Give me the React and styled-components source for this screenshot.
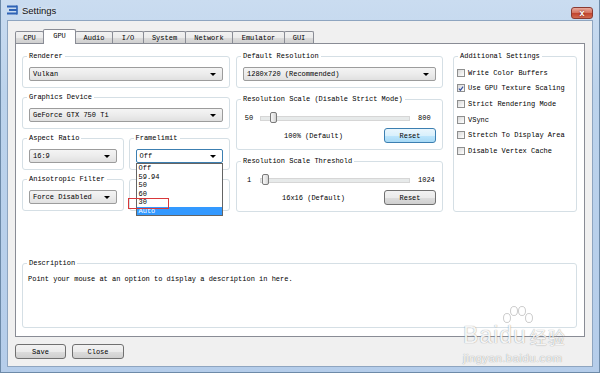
import React from "react"
import styled, { createGlobalStyle } from "styled-components"

const GlobalStyle = createGlobalStyle`
  html, body {
    margin: 0;
    padding: 0;
    background: #fff;
  }
  body {
    font-family: "Liberation Mono", "DejaVu Sans Mono", monospace;
    font-size: 7px;
    color: #000;
  }
  * {
    box-sizing: border-box;
  }
`

const Window = styled.div`
  position: relative;
  width: 600px;
  height: 373px;
  display: flex;
  flex-direction: column;
  padding: 0 6px 5px;
  border: 1px solid #6d8aa8;
  border-top: none;
  background: linear-gradient(180deg, #cadcf0 0%, #bcd3ec 25%, #b5cdea 100%);
  overflow: hidden;
`

const TitleBar = styled.div`
  height: 20px;
  display: flex;
  align-items: center;
`

const TitleText = styled.span`
  margin-left: 3px;
  font-family: "Liberation Sans", Arial, sans-serif;
  font-size: 9.5px;
  color: #111;
  text-shadow: 0 0 4px rgba(255, 255, 255, 0.9);
`

const CloseButton = styled.div`
  align-self: flex-start;
  margin-top: 7px;
  margin-left: auto;
  width: 22px;
  height: 12px;
  border: 1px solid #8a3a32;
  border-radius: 3px;
  background: linear-gradient(180deg, #e9a99c 0%, #d67663 45%, #c2452f 55%, #d2694f 100%);
  display: flex;
  align-items: center;
  justify-content: center;
  color: #fff;
  font-family: "Liberation Sans", Arial, sans-serif;
  font-weight: bold;
  font-size: 9px;
  line-height: 1;
  text-shadow: 0 0 2px #5a1a12;
`

const Client = styled.div`
  flex: 1;
  display: flex;
  flex-direction: column;
  background: #f0f0f0;
  border: 1px solid #8ea5c0;
  padding: 8px 7px 7px;
`

const TabStrip = styled.div`
  height: 14px;
  display: flex;
  align-items: flex-end;
`

const Tab = styled.div`
  position: relative;
  width: ${p => p.$w}px;
  height: ${p => (p.$active ? 15 : 12)}px;
  margin-right: -1px;
  margin-bottom: ${p => (p.$active ? -1 : 0)}px;
  z-index: ${p => (p.$active ? 2 : 1)};
  border: 1px solid #898c95;
  border-bottom: none;
  border-radius: 2px 2px 0 0;
  background: ${p =>
    p.$active
      ? "#fff"
      : "linear-gradient(180deg, #f2f2f2 0%, #ebebeb 50%, #dddddd 51%, #cfcfcf 100%)"};
  display: flex;
  align-items: ${p => (p.$active ? "flex-start" : "center")};
  padding-top: ${p => (p.$active ? 2 : 0)}px;
  justify-content: center;
  white-space: nowrap;
`

const Panel = styled.div`
  height: 294px;
  border: 1px solid #898c95;
  background: #fff;
  padding: 12px 7px 8px 6px;
  display: flex;
  flex-direction: column;
  justify-content: space-between;
`

const Columns = styled.div`
  display: flex;
  align-items: flex-start;
`

const Column = styled.div`
  width: ${p => p.$w}px;
  margin-left: ${p => p.$ml || 0}px;
  display: flex;
  flex-direction: column;
  gap: ${p => p.$gap}px;
`

const Pair = styled.div`
  display: flex;
  gap: 5px;
`

const Group = styled.div`
  position: relative;
  flex: ${p => (p.$grow ? "1 1 0" : "none")};
  min-width: 0;
  height: ${p => (p.$h ? `${p.$h}px` : "auto")};
  border: 1px solid #d5dfe5;
  border-radius: 3px;
  padding: ${p => p.$pad || "10px 6px 6px"};
`

const GroupLabel = styled.span`
  position: absolute;
  top: -5px;
  left: 4px;
  padding: 0 2px;
  line-height: 9px;
  background: #fff;
  white-space: nowrap;
`

const Select = styled.div`
  position: relative;
  height: 14px;
  display: flex;
  align-items: center;
  padding: 0 3px;
  border: 1px solid ${p => (p.$focus ? "#3c7fb1" : "#9c9c9c")};
  border-radius: 2px;
  background: ${p =>
    p.$focus ? "#fff" : "linear-gradient(180deg, #f4f4f4 0%, #ececec 50%, #e0e0e0 100%)"};
  white-space: nowrap;

  &::after {
    content: "";
    position: absolute;
    right: 6px;
    top: 5px;
    border-left: 3px solid transparent;
    border-right: 3px solid transparent;
    border-top: 3px solid #000;
  }
`

const Dropdown = styled.div`
  position: absolute;
  top: 13px;
  left: -1px;
  right: -1px;
  z-index: 5;
  border: 1px solid #646464;
  background: #fff;
`

const Option = styled.div`
  height: 8.5px;
  line-height: 8.5px;
  padding-left: 2px;
  background: ${p => (p.$hl ? "#3399ff" : "transparent")};
  color: ${p => (p.$hl ? "#fff" : "#000")};
`

const Marker = styled.div`
  position: absolute;
  left: -9px;
  top: 34px;
  width: 41px;
  height: 11px;
  border: 1.5px solid #d8383a;
`

const SliderRow = styled.div`
  height: 13px;
  display: flex;
  align-items: center;
`

const MinLabel = styled.span`
  width: 12px;
  margin-right: 5px;
  text-align: center;
`

const MaxLabel = styled.span`
  width: 18px;
  margin-left: 8px;
`

const Track = styled.div`
  position: relative;
  flex: 1;
  height: 13px;

  &::before {
    content: "";
    position: absolute;
    left: 0;
    right: 0;
    top: 5px;
    height: 3px;
    border: 1px solid #d6d6d6;
    background: #e7eaea;
  }
`

const Thumb = styled.div`
  position: absolute;
  top: 1px;
  width: 7px;
  height: 11px;
  border: 1px solid #7a7a7a;
  border-radius: 2px;
  background: linear-gradient(90deg, #f6f6f6 0%, #e4e4e4 60%, #d2d2d2 100%);
`

const ActionRow = styled.div`
  margin-top: 4px;
  display: flex;
  align-items: center;
`

const DefaultText = styled.span`
  flex: 1;
  text-align: center;
`

const Button = styled.div`
  width: ${p => p.$w}px;
  height: 15px;
  display: flex;
  align-items: center;
  justify-content: center;
  border: 1px solid ${p => (p.$primary ? "#3c7fb1" : "#707070")};
  border-radius: 3px;
  background: ${p =>
    p.$primary
      ? "linear-gradient(180deg, #eaf6fd 0%, #d9f0fc 50%, #bee6fd 51%, #a7d9f5 100%)"
      : "linear-gradient(180deg, #f2f2f2 0%, #ebebeb 50%, #dddddd 51%, #cfcfcf 100%)"};
`

const CheckList = styled.div`
  display: flex;
  flex-direction: column;
`

const CheckRow = styled.div`
  height: 15.6px;
  display: flex;
  align-items: center;
  gap: 3px;
  white-space: nowrap;
`

const Box = styled.div`
  width: 8px;
  height: 8px;
  border: 1px solid #8e8f8f;
  background: linear-gradient(135deg, #d8d8d8 0%, #f4f4f4 70%, #fff 100%);
  display: flex;
  align-items: center;
  justify-content: center;
`

const DescText = styled.div`
  line-height: 9px;
`

const BottomBar = styled.div`
  margin-top: 7px;
  display: flex;
  gap: 6px;
`

const Watermark = styled.div`
  position: absolute;
  left: 462px;
  top: 306px;
  display: flex;
  flex-direction: column;
  align-items: flex-start;
  pointer-events: none;
  color: rgba(255, 255, 255, 0.92);
  text-shadow: 0 0 1px rgba(0, 0, 0, 0.25), 0 0 1px rgba(0, 0, 0, 0.25);
`

const MarkLine = styled.div`
  display: flex;
  align-items: flex-end;
  margin-top: -2px;
  font-family: "Liberation Sans", Arial, sans-serif;
  font-size: 23px;
  line-height: 23px;
  letter-spacing: 1px;
`

const MarkCjk = styled.span`
  margin-left: 3px;
  font-family: "Noto Sans CJK SC", sans-serif;
  font-size: 17px;
  line-height: 21px;
`

const MarkUrl = styled.div`
  margin-top: 5px;
  font-family: "Liberation Sans", Arial, sans-serif;
  font-size: 11.5px;
  letter-spacing: 0.4px;
`

const AppIcon = () => (
  <svg width="12" height="10" viewBox="0 0 12 10">
    <path d="M0 1.5h10M2 5h8M0 8.5h10" stroke="#2f63b5" strokeWidth="1.8" />
    <path d="M10 0.6v8.8" stroke="#2f63b5" strokeWidth="1.6" />
  </svg>
)

const CheckMark = () => (
  <svg width="7" height="7" viewBox="0 0 7 7">
    <path d="M1 3.6l1.8 1.9L6 1.2" fill="none" stroke="#3b56a3" strokeWidth="1.4" />
  </svg>
)

const Paw = () => (
  <svg width="34" height="20" viewBox="0 0 34 20" style={{ marginLeft: 38 }}>
    <g fill="rgba(255,255,255,0.9)" stroke="rgba(0,0,0,0.2)" strokeWidth="1">
      <ellipse cx="6" cy="12" rx="3.5" ry="4.5" />
      <ellipse cx="13" cy="5" rx="3.5" ry="4.5" />
      <ellipse cx="21" cy="5" rx="3.5" ry="4.5" />
      <ellipse cx="28" cy="12" rx="3.5" ry="4.5" />
    </g>
  </svg>
)

const tabs = [
  { name: "CPU", w: 29 },
  { name: "GPU", w: 33, active: true },
  { name: "Audio", w: 38 },
  { name: "I/O", w: 32 },
  { name: "System", w: 43 },
  { name: "Network", w: 48 },
  { name: "Emulator", w: 53 },
  { name: "GUI", w: 30 },
]

const frameOptions = ["Off", "59.94", "50", "60", "30", "Auto"]

const checks = [
  { label: "Write Color Buffers", on: false },
  { label: "Use GPU Texture Scaling", on: true },
  { label: "Strict Rendering Mode", on: false },
  { label: "VSync", on: false },
  { label: "Stretch To Display Area", on: false },
  { label: "Disable Vertex Cache", on: false },
]

const Slider = ({ min, max, value }) => {
  // thumb travels over the track minus its own width (144px)
  const left = Math.round(((value - min) / (max - min)) * 144)
  return (
    <SliderRow>
      <MinLabel>{min}</MinLabel>
      <Track>
        <Thumb style={{ left }} />
      </Track>
      <MaxLabel>{max}</MaxLabel>
    </SliderRow>
  )
}

const App = () => (
  <React.Fragment>
    <GlobalStyle />
    <Window>
      <TitleBar>
        <AppIcon />
        <TitleText>Settings</TitleText>
        <CloseButton>x</CloseButton>
      </TitleBar>
      <Client>
        <TabStrip>
          {tabs.map(t => (
            <Tab key={t.name} $w={t.w} $active={t.active}>
              {t.name}
            </Tab>
          ))}
        </TabStrip>
        <Panel>
          <Columns>
            <Column $w={208} $gap={9}>
              <Group>
                <GroupLabel>Renderer</GroupLabel>
                <Select>Vulkan</Select>
              </Group>
              <Group>
                <GroupLabel>Graphics Device</GroupLabel>
                <Select>GeForce GTX 750 Ti</Select>
              </Group>
              <Pair>
                <Group $grow>
                  <GroupLabel>Aspect Ratio</GroupLabel>
                  <Select>16:9</Select>
                </Group>
                <Group $grow>
                  <GroupLabel>Framelimit</GroupLabel>
                  <Select $focus>
                    Off
                    <Dropdown>
                      {frameOptions.map(o => (
                        <Option key={o} $hl={o === "Auto"}>
                          {o}
                        </Option>
                      ))}
                      <Marker />
                    </Dropdown>
                  </Select>
                </Group>
              </Pair>
              <Pair>
                <Group $grow>
                  <GroupLabel>Anisotropic Filter</GroupLabel>
                  <Select>Force Disabled</Select>
                </Group>
                <Group $grow $h={32} />
              </Pair>
            </Column>

            <Column $w={207} $ml={6} $gap={11}>
              <Group>
                <GroupLabel>Default Resolution</GroupLabel>
                <Select>1280x720 (Recommended)</Select>
              </Group>
              <Group $pad="11px 6px 6px">
                <GroupLabel>Resolution Scale (Disable Strict Mode)</GroupLabel>
                <Slider min={50} max={800} value={100} />
                <ActionRow>
                  <DefaultText>100% (Default)</DefaultText>
                  <Button $w={52} $primary>
                    Reset
                  </Button>
                </ActionRow>
              </Group>
              <Group $pad="11px 6px 6px">
                <GroupLabel>Resolution Scale Threshold</GroupLabel>
                <Slider min={1} max={1024} value={16} />
                <ActionRow>
                  <DefaultText>16x16 (Default)</DefaultText>
                  <Button $w={52}>Reset</Button>
                </ActionRow>
              </Group>
            </Column>

            <Column $w={124} $ml={10} $gap={0}>
              <Group $h={156} $pad="8px 3px">
                <GroupLabel>Additional Settings</GroupLabel>
                <CheckList>
                  {checks.map(c => (
                    <CheckRow key={c.label}>
                      <Box>{c.on && <CheckMark />}</Box>
                      {c.label}
                    </CheckRow>
                  ))}
                </CheckList>
              </Group>
            </Column>
          </Columns>

          <Group $h={65} $pad="11px 5px">
            <GroupLabel>Description</GroupLabel>
            <DescText>
              Point your mouse at an option to display a description in here.
            </DescText>
          </Group>
        </Panel>
        <BottomBar>
          <Button $w={51}>Save</Button>
          <Button $w={52}>Close</Button>
        </BottomBar>
      </Client>
      <Watermark>
        <Paw />
        <MarkLine>
          Baidu
          <MarkCjk>经验</MarkCjk>
        </MarkLine>
        <MarkUrl>jingyan.baidu.com</MarkUrl>
      </Watermark>
    </Window>
  </React.Fragment>
)

export default App
